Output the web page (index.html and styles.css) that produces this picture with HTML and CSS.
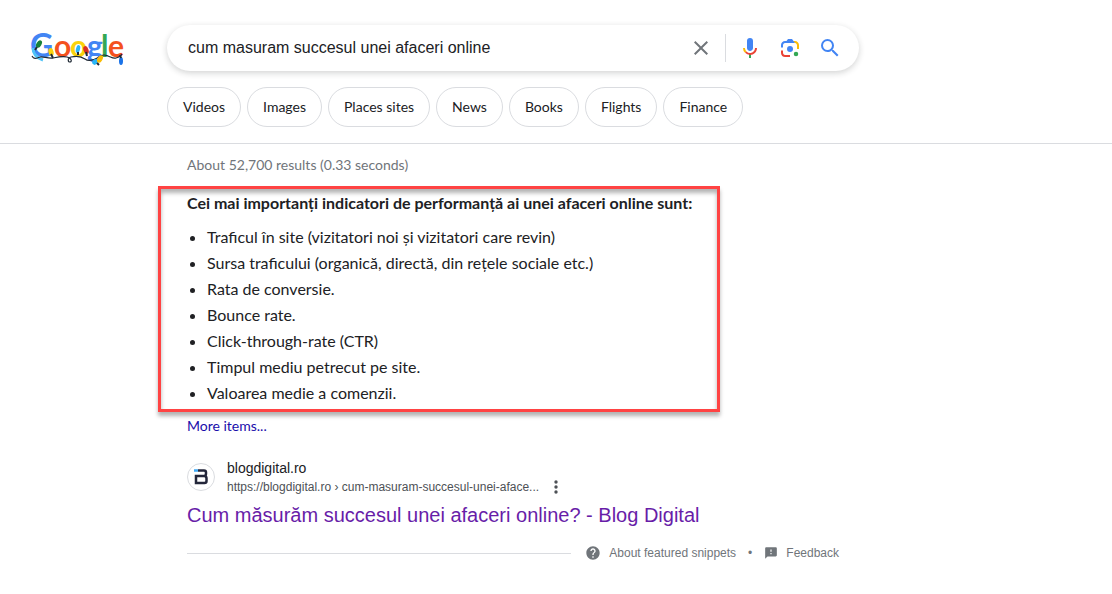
FILE: index.html
```html
<!DOCTYPE html>
<html lang="ro">
<head>
    <meta charset="UTF-8">
    <meta name="viewport" content="width=device-width, initial-scale=1.0">
    <title>cum masuram succesul unei afaceri online - Google Search</title>
    <link rel="stylesheet" href="styles.css">
</head>
<body>
    <header class="header">
        <div class="top-row">
            <a href="#" class="logo" aria-label="Google">
                <svg width="100" height="46" viewBox="-2 -8 100 46">
                    <g class="logo-text">
                        <text x="0" y="24" fill="#4285f4" class="logo-cap">G</text>
                        <text x="24" y="24" fill="#f4511e">o</text>
                        <text x="40" y="24" fill="#fbd30b">o</text>
                        <text x="57" y="24" fill="#4285f4">g</text>
                        <text x="71" y="24" fill="#34a853">l</text>
                        <text x="78" y="24" fill="#f4511e">e</text>
                    </g>
                    <path d="M3 15c0 6 4 10 10 12" fill="none" stroke="#4fc3f7" stroke-width="3"/>
                    <!-- String of lights -->
                    <path d="M2 23c2 4 5 2 8 1s8 2 13 1 9-2 14-1 5 5 3 5-3-4 1-5 10-1 14 2 9 1 14-2 6-2 9-1 5 3 8 2 5-2 6-4" fill="none" stroke="#202a35" stroke-width="1.200"/>
                    <g>
                        <ellipse cx="9" cy="11" rx="2.500" ry="4" transform="rotate(30 9 11)" fill="#188038"/>
                        <path d="M7 14l-2 3" stroke="#202a35" stroke-width="2"/>
                        <ellipse cx="21" cy="19" rx="2.500" ry="4" transform="rotate(-15 21 19)" fill="#fbd30b"/>
                        <path d="M21 21l2 4" stroke="#202a35" stroke-width="2"/>
                        <ellipse cx="48" cy="16" rx="2" ry="4" transform="rotate(15 48 16)" fill="#29b6f6"/>
                        <path d="M48 19v3" stroke="#202a35" stroke-width="2"/>
                        <ellipse cx="56" cy="17" rx="2.500" ry="4" transform="rotate(-20 56 17)" fill="#d93025"/>
                        <path d="M56 19l1 4" stroke="#202a35" stroke-width="2"/>
                        <ellipse cx="65" cy="29" rx="2.500" ry="3" transform="rotate(45 65 29)" fill="#29b6f6"/>
                        <ellipse cx="70" cy="26" rx="2.500" ry="4" transform="rotate(30 70 26)" fill="#fbbc04"/>
                        <path d="M67 30l2 2" stroke="#202a35" stroke-width="2"/>
                        <ellipse cx="91" cy="28" rx="2" ry="4" fill="#1a73e8"/>
                        <path d="M90 22l1 3" stroke="#202a35" stroke-width="2"/>
                    </g>
                </svg>
            </a>
            <form class="search-box">
                <input type="text" class="search-input" aria-label="Search" value="cum masuram succesul unei afaceri online">
                <button type="button" class="icon-btn clear-btn" aria-label="Clear">
                    <svg width="24" height="24" viewBox="0 0 24 24"><path fill="#70757a" d="M19 6.41L17.59 5 12 10.59 6.41 5 5 6.41 10.59 12 5 17.59 6.41 19 12 13.41 17.59 19 19 17.59 13.41 12z"/></svg>
                </button>
                <button type="button" class="icon-btn" aria-label="Search by voice">
                    <svg width="24" height="24" viewBox="0 0 24 24">
                        <path fill="#4285f4" d="M12 15c1.66 0 3-1.31 3-2.97V4.98A2.98 2.98 0 0 0 12 2a2.98 2.98 0 0 0-3 2.98v7.05C9 13.69 10.34 15 12 15z"/>
                        <path fill="#34a853" d="M11 18.08h2V22h-2z"/>
                        <path fill="#fbbc04" d="M7.05 16.87A6.75 6.75 0 0 1 5 12h2c0 1.45.56 2.42 1.47 3.38z"/>
                        <path fill="#ea4335" d="M12 16.93a4.97 4.97 0 0 1-3.54-1.55l-1.41 1.49A6.93 6.93 0 0 0 12 18.94c3.87 0 6.99-2.92 6.99-7H17c0 2.92-2.24 4.99-5 4.99z"/>
                    </svg>
                </button>
                <button type="button" class="icon-btn" aria-label="Search by image">
                    <svg width="24" height="24" viewBox="0 0 192 192">
                        <circle fill="#34a853" cx="144.07" cy="144" r="18"/>
                        <circle fill="#4285f4" cx="96.07" cy="104" r="24"/>
                        <path fill="#ea4335" d="M24 135.2c0 18.11 14.69 32.8 32.8 32.8H96v-16l-40.1-.1c-8.8 0-15.9-8.19-15.9-17.9v-18H24v19.2z"/>
                        <path fill="#fbbc04" d="M168 72.8c0-18.11-14.69-32.8-32.8-32.8H116l20 16c8.8 0 16 8.29 16 18v30h16V72.8z"/>
                        <path fill="#4285f4" d="M112 24H80L68 40H56.8C38.69 40 24 54.69 24 72.8V92h16V74c0-9.71 7.2-18 16-18h80l-24-32z"/>
                    </svg>
                </button>
                <button type="submit" class="icon-btn" aria-label="Google Search">
                    <svg width="24" height="24" viewBox="0 0 24 24"><path fill="#4285f4" d="M15.5 14h-.79l-.28-.27A6.47 6.47 0 0 0 16 9.5 6.5 6.5 0 1 0 9.5 16c1.61 0 3.09-.59 4.23-1.57l.27.28v.79l5 4.99L20.49 19l-4.99-5zm-6 0C7.01 14 5 11.99 5 9.5S7.01 5 9.5 5 14 7.01 14 9.5 11.99 14 9.5 14z"/></svg>
                </button>
            </form>
        </div>
        <nav class="chips">
            <a href="#" class="chip">Videos</a>
            <a href="#" class="chip">Images</a>
            <a href="#" class="chip">Places sites</a>
            <a href="#" class="chip">News</a>
            <a href="#" class="chip">Books</a>
            <a href="#" class="chip">Flights</a>
            <a href="#" class="chip">Finance</a>
        </nav>
    </header>

    <main class="results">
        <div class="stats">About 52,700 results (0.33 seconds)</div>

        <!-- Featured snippet -->
        <section class="snippet">
            <h2>Cei mai importanți indicatori de performanță ai unei afaceri online sunt:</h2>
            <ul>
                <li>Traficul în site (vizitatori noi și vizitatori care revin)</li>
                <li>Sursa traficului (organică, directă, din rețele sociale etc.)</li>
                <li>Rata de conversie.</li>
                <li>Bounce rate.</li>
                <li>Click-through-rate (CTR)</li>
                <li>Timpul mediu petrecut pe site.</li>
                <li>Valoarea medie a comenzii.</li>
            </ul>
        </section>
        <a href="#" class="more-items">More items...</a>

        <!-- Source site -->
        <div class="source">
            <span class="favicon">
                <svg width="14" height="16" viewBox="0 0 14 16" fill="none" stroke-width="2.500">
                    <path stroke="#23263a" d="M4 1.500h6q2 0 2 2v1q0 2.500-2 2.500H2v7h8.500q2 0 2-2v-2.500q0-2.500-2.500-2.500"/>
                    <path stroke="#3fa9f5" d="M0 1.500h4"/>
                </svg>
            </span>
            <div class="source-text">
                <div class="site-name">blogdigital.ro</div>
                <div class="site-url">
                    <cite>https://blogdigital.ro › cum-masuram-succesul-unei-aface...</cite>
                    <button type="button" class="menu-btn" aria-label="About this result">
                        <svg width="4" height="14" viewBox="0 0 4 14" fill="#4d5156"><circle cx="2" cy="2" r="1.7"/><circle cx="2" cy="7" r="1.7"/><circle cx="2" cy="12" r="1.7"/></svg>
                    </button>
                </div>
            </div>
        </div>
        <h3 class="title"><a href="#">Cum măsurăm succesul unei afaceri online? - Blog Digital</a></h3>

        <footer class="snippet-footer">
            <span class="line"></span>
            <a href="#" class="about">
                <svg width="16" height="16" viewBox="0 0 24 24"><path fill="#70757a" d="M12 2C6.48 2 2 6.48 2 12s4.48 10 10 10 10-4.48 10-10S17.52 2 12 2zm1 17h-2v-2h2v2zm2.07-7.75l-.9.92C13.45 12.9 13 13.5 13 15h-2v-.5c0-1.1.45-2.1 1.17-2.83l1.24-1.26c.37-.36.59-.86.59-1.41 0-1.1-.9-2-2-2s-2 .9-2 2H8c0-2.21 1.79-4 4-4s4 1.79 4 4c0 .88-.36 1.68-.93 2.25z"/></svg>
                About featured snippets
            </a>
            <span class="dot">•</span>
            <a href="#" class="feedback">
                <svg width="14" height="14" viewBox="0 0 24 24"><path fill="#70757a" d="M20 2H4c-1.100 0-2 .9-2 2v18l4-4h14c1.100 0 2-.9 2-2V4c0-1.100-.9-2-2-2zm-7 12h-2v-2h2v2zm0-4h-2V6h2v4z"/></svg>
                Feedback
            </a>
        </footer>
    </main>
</body>
</html>
```
FILE: styles.css
```css
* {
    margin: 0;
    padding: 0;
    box-sizing: border-box;
}

body {
    font-family: "Liberation Sans", Arial, sans-serif;
    background-color: #fff;
    color: #202124;
}

a {
    text-decoration: none;
}

svg {
    display: block;
}

/* Header */
.header {
    padding: 25px 0 16px;
    border-bottom: 1px solid #dadce0;
}

.top-row {
    display: flex;
    align-items: center;
}

.logo {
    width: 167px;
    padding-left: 28px;
}

.logo-text {
    font-family: Lato, sans-serif;
    font-size: 30px;
    font-weight: bold;
}

.logo-cap {
    font-size: 32px;
}

.search-box {
    flex: 1;
    max-width: 692px;
    height: 46px;
    display: flex;
    align-items: center;
    padding: 0 9px 0 21px;
    border-radius: 24px;
    box-shadow: 0 2px 6px rgba(32, 33, 36, 0.2);
}

.search-input {
    flex: 1;
    min-width: 0;
    border: none;
    outline: none;
    background: transparent;
    font-family: "Liberation Sans", Arial, sans-serif;
    font-size: 16px;
    color: #202124;
}

.icon-btn {
    width: 40px;
    height: 28px;
    display: flex;
    align-items: center;
    justify-content: center;
    border: none;
    background: transparent;
    cursor: pointer;
}

.clear-btn {
    width: 50px;
    margin-right: 4px;
    border-right: 1px solid #dadce0;
}

.chips {
    display: flex;
    gap: 6px;
    margin: 16px 0 0 167px;
}

.chip {
    height: 40px;
    padding: 0 15px;
    border: 1px solid #dadce0;
    border-radius: 20px;
    font-family: Lato, sans-serif;
    font-size: 14px;
    line-height: 38px;
    color: #202124;
    white-space: nowrap;
}

/* Results */
.results {
    max-width: 839px;
    padding: 11px 0 24px 187px;
}

.stats {
    font-family: Lato, sans-serif;
    font-size: 14px;
    line-height: 20px;
    color: #70757a;
}

.snippet {
    width: 562px;
    margin: 11px 0 0 -29px;
    padding: 1px 0 3px 26px;
    border: 3px solid #ff4343;
    box-shadow: 0 4px 4px rgba(0, 0, 0, 0.3), inset 0 4px 4px rgba(0, 0, 0, 0.3);
    font-family: Lato, sans-serif;
    font-size: 16px;
}

.snippet h2 {
    margin-bottom: 8px;
    font-size: 16px;
    line-height: 26px;
    white-space: nowrap;
}

.snippet ul {
    padding-left: 20px;
}

.snippet li {
    line-height: 26px;
}

.more-items {
    display: block;
    margin-top: 4px;
    font-family: Lato, sans-serif;
    font-size: 14px;
    line-height: 20px;
    color: #1a0dab;
}

.source {
    display: flex;
    align-items: center;
    gap: 12px;
    margin-top: 22px;
}

.favicon {
    width: 28px;
    height: 28px;
    display: flex;
    align-items: center;
    justify-content: center;
    border: 1px solid #dadce0;
    border-radius: 50%;
}

.site-name {
    font-size: 14px;
    line-height: 20px;
}

.site-url {
    display: flex;
    align-items: center;
    font-size: 12px;
    line-height: 18px;
    color: #4d5156;
}

.site-url cite {
    font-style: normal;
}

.menu-btn {
    margin-left: 15px;
    border: none;
    background: transparent;
    cursor: pointer;
}

.title {
    margin-top: 6px;
    font-size: 20px;
    font-weight: normal;
    line-height: 26px;
}

.title a {
    color: #681da8;
}

/* Snippet footer */
.snippet-footer {
    display: flex;
    align-items: center;
    margin-top: 16px;
    font-size: 12px;
    line-height: 18px;
}

.snippet-footer a {
    display: flex;
    align-items: center;
    gap: 8px;
    color: #70757a;
}

.line {
    flex: 1;
    height: 1px;
    margin-right: 14px;
    background-color: #dadce0;
}

.dot {
    margin: 0 12px;
    color: #70757a;
}
```
